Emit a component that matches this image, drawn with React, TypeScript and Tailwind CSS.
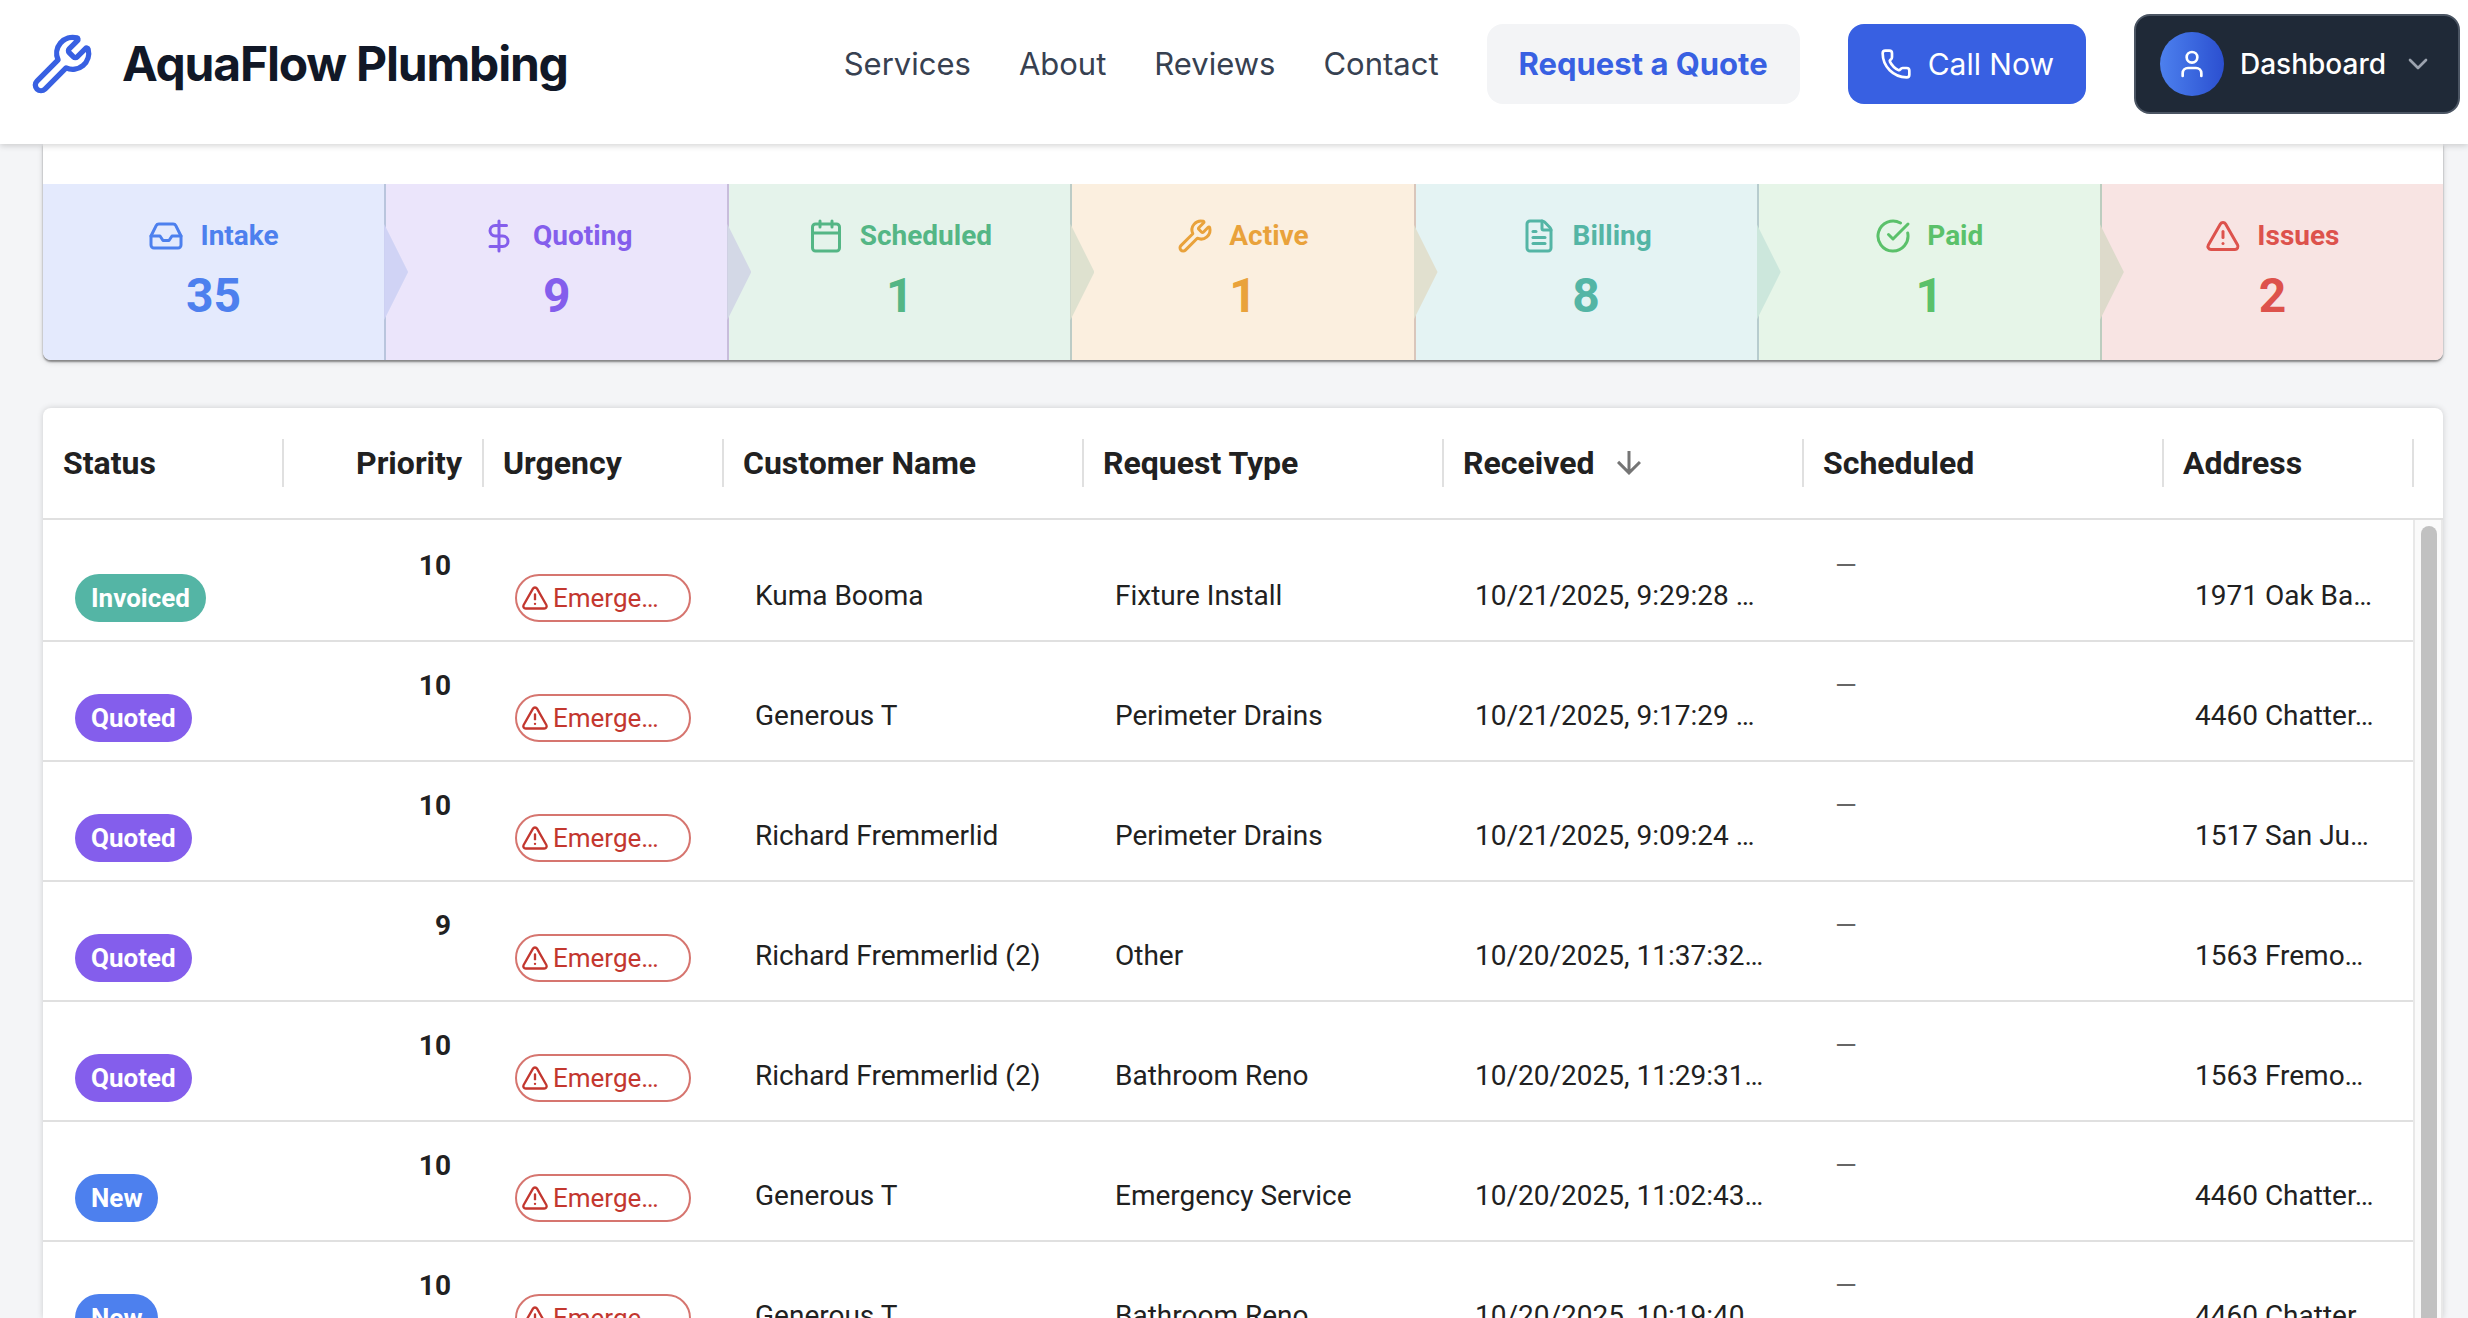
import React from "react";
import {
  Inbox,
  DollarSign,
  Calendar,
  Wrench,
  FileText,
  CircleCheckBig,
  TriangleAlert,
  Phone,
  User,
  ChevronDown,
} from "lucide-react";

const navLinks = ["Services", "About", "Reviews", "Contact"];

const stages = [
  { label: "Intake", count: 35, Icon: Inbox, cell: "bg-[#e4eafd] text-[#4d80ee] border-[#b9c5dd]", arrow: "bg-[#d0d3f5]" },
  { label: "Quoting", count: 9, Icon: DollarSign, cell: "bg-[#ebe5fb] text-[#845eec] border-[#c8bddb]", arrow: "bg-[#d3d8e6]" },
  { label: "Scheduled", count: 1, Icon: Calendar, cell: "bg-[#e5f3eb] text-[#54b685] border-[#bcccc6]", arrow: "bg-[#dee1cf]" },
  { label: "Active", count: 1, Icon: Wrench, cell: "bg-[#fbefdf] text-[#e9a23b] border-[#d9c6bb]", arrow: "bg-[#e1e0cf]" },
  { label: "Billing", count: 8, Icon: FileText, cell: "bg-[#e4f3f3] text-[#54b5a5] border-[#b7ccce]", arrow: "bg-[#cce7dc]" },
  { label: "Paid", count: 1, Icon: CircleCheckBig, cell: "bg-[#e6f5e8] text-[#5bc16a] border-[#bccdbf]", arrow: "bg-[#dddacb]" },
  { label: "Issues", count: 2, Icon: TriangleAlert, cell: "bg-[#f8e4e3] text-[#dd524c] border-transparent", arrow: "" },
];

const statusColors: Record<string, string> = {
  Invoiced: "bg-[#54b5a5]",
  Quoted: "bg-[#845eec]",
  New: "bg-[#4d80ee]",
};

const rows = [
  { status: "Invoiced", priority: 10, name: "Kuma Booma", type: "Fixture Install", received: "10/21/2025, 9:29:28 …", address: "1971 Oak Ba…" },
  { status: "Quoted", priority: 10, name: "Generous T", type: "Perimeter Drains", received: "10/21/2025, 9:17:29 …", address: "4460 Chatter…" },
  { status: "Quoted", priority: 10, name: "Richard Fremmerlid", type: "Perimeter Drains", received: "10/21/2025, 9:09:24 …", address: "1517 San Ju…" },
  { status: "Quoted", priority: 9, name: "Richard Fremmerlid (2)", type: "Other", received: "10/20/2025, 11:37:32…", address: "1563 Fremo…" },
  { status: "Quoted", priority: 10, name: "Richard Fremmerlid (2)", type: "Bathroom Reno", received: "10/20/2025, 11:29:31…", address: "1563 Fremo…" },
  { status: "New", priority: 10, name: "Generous T", type: "Emergency Service", received: "10/20/2025, 11:02:43…", address: "4460 Chatter…" },
  { status: "New", priority: 10, name: "Generous T", type: "Bathroom Reno", received: "10/20/2025, 10:19:40…", address: "4460 Chatter…" },
];

const columns = [
  { label: "Status", width: "w-60" },
  { label: "Priority", width: "w-50" },
  { label: "Urgency", width: "w-60" },
  { label: "Customer Name", width: "w-90" },
  { label: "Request Type", width: "w-90" },
  { label: "Received", width: "w-90" },
  { label: "Scheduled", width: "w-90" },
  { label: "Address", width: "" },
];

function SortArrow() {
  return (
    <svg viewBox="0 0 24 24" className="ml-4 size-9 fill-[#757575]" role="img" aria-label="sorted descending">
      <path d="M20 12l-1.41-1.41L13 16.17V4h-2v12.17l-5.58-5.59L4 12l8 8z" />
    </svg>
  );
}

function Header() {
  return (
    <header className="relative z-10 flex items-center justify-between bg-white pt-3.5 pr-2 pb-7.5 pl-7.5 shadow-[0_2px_6px_rgba(0,0,0,0.16)]">
      <a href="#home" className="flex items-center gap-7 whitespace-nowrap text-5xl font-bold tracking-tight text-[#111827]">
        <Wrench className="size-16 text-[#3860e2]" aria-hidden="true" />
        AquaFlow Plumbing
      </a>
      <nav className="flex items-center gap-12 text-[31px] leading-10 whitespace-nowrap text-[#374151]">
        {navLinks.map((link) => (
          <a key={link} href={`#${link.toLowerCase()}`}>{link}</a>
        ))}
        <button className="rounded-2xl bg-[#f3f4f6] px-8 py-5 font-bold text-[#3860e2]">Request a Quote</button>
        <a href="#call" className="flex items-center gap-4 rounded-2xl bg-[#3860e2] px-8 py-5 text-3xl leading-10 text-white">
          <Phone className="size-8" aria-hidden="true" />
          Call Now
        </a>
        <button className="flex items-center gap-4 rounded-2xl border-2 border-[#4b5563] bg-[#1f2937] px-6 py-4 text-[28px] font-medium text-white">
          <span className="flex size-16 items-center justify-center rounded-full bg-linear-to-r from-[#4d80ee] to-[#2c4fd0]">
            <User className="size-8" aria-hidden="true" />
          </span>
          Dashboard
          <ChevronDown className="size-8 text-[#9ca3af]" aria-hidden="true" />
        </button>
      </nav>
    </header>
  );
}

function StagePipeline() {
  return (
    <section aria-label="Job pipeline" className="rounded-b-lg bg-white pt-10 shadow-[0_2px_2px_rgba(0,0,0,0.4),0_2px_6px_rgba(0,0,0,0.14)]">
      <ul className="flex">
        {stages.map(({ label, count, Icon, cell, arrow }) => (
          <li key={label} className={`relative flex-1 border-r-2 first:rounded-bl-lg last:rounded-br-lg last:border-r-0 ${cell}`}>
            <button className="flex h-44 w-full flex-col items-center pt-8 font-bold">
              <span className="flex items-center gap-4 text-[28px] leading-10">
                <Icon className="size-9" aria-hidden="true" />
                {label}
              </span>
              <span className="text-5xl leading-20">{count}</span>
            </button>
            {arrow && (
              <span className={`absolute top-10 -right-6 z-1 h-24 w-6 [clip-path:polygon(0_0,100%_50%,0_100%)] ${arrow}`} />
            )}
          </li>
        ))}
      </ul>
    </section>
  );
}

function RequestTable() {
  return (
    <section className="min-h-0 flex-1 overflow-hidden rounded-t-lg bg-white shadow-[0_0_6px_rgba(0,0,0,0.16)]">
      <table className="w-full table-fixed border-separate border-spacing-0 text-[28px] leading-10 text-[#212121]">
        <colgroup>
          {columns.map((c) => (
            <col key={c.label} className={c.width} />
          ))}
          <col className="w-7.5" />
        </colgroup>
        <thead>
          <tr className="h-28 text-left text-[32px]">
            {columns.map((c) => (
              <th key={c.label} scope="col" className="border-b-2 border-[#e0e0e0] p-0 font-bold">
                <div className={`-mr-px flex h-12 items-center border-r-2 border-[#e0e0e0] px-5 whitespace-nowrap ${c.label === "Priority" ? "justify-end" : ""}`}>
                  {c.label}
                  {c.label === "Received" && <SortArrow />}
                </div>
              </th>
            ))}
            <td className="border-b-2 border-[#e0e0e0]" />
          </tr>
        </thead>
        <tbody>
          {rows.map((r, i) => {
            const cell = `h-30 border-t-2 px-8 align-top whitespace-nowrap ${i === 0 ? "border-transparent" : "border-[#e0e0e0]"}`;
            return (
              <tr key={i}>
                <td className={`${cell} pt-13`}>
                  <span className={`flex h-12 w-fit items-center rounded-full px-4 text-[26px] font-bold text-white ${statusColors[r.status]}`}>{r.status}</span>
                </td>
                <td className={`${cell} pt-6 text-right font-bold`}>{r.priority}</td>
                <td className={`${cell} pt-13`}>
                  <span className="flex h-12 items-center gap-1 rounded-full border-2 border-[#d6756f] pl-1 text-[26px] text-[#c3372f]">
                    <TriangleAlert className="size-7 shrink-0" aria-hidden="true" />
                    Emerge…
                  </span>
                </td>
                <td className={`${cell} pt-13.5`}>{r.name}</td>
                <td className={`${cell} pt-13.5`}>{r.type}</td>
                <td className={`${cell} pt-13.5`}>{r.received}</td>
                <td className={`${cell} pt-6 text-[#666666]`}>—</td>
                <td className={`${cell} pt-13.5`}>{r.address}</td>
                {i === 0 && (
                  <td rowSpan={rows.length} className="h-px border-x-2 border-[#e8e8e8] bg-[#fafafa] pt-1.5 pr-1 pl-1.5">
                    <div className="h-full rounded-t-full bg-[#c1c1c1]" />
                  </td>
                )}
              </tr>
            );
          })}
        </tbody>
      </table>
    </section>
  );
}

export default function App() {
  return (
    <div className="flex h-screen flex-col overflow-hidden bg-[#f4f5f7] font-['Inter',sans-serif]">
      <Header />
      <main className="flex min-h-0 flex-1 flex-col gap-12 pr-[25px] pl-[43px] font-['Roboto',sans-serif]">
        <StagePipeline />
        <RequestTable />
      </main>
    </div>
  );
}
